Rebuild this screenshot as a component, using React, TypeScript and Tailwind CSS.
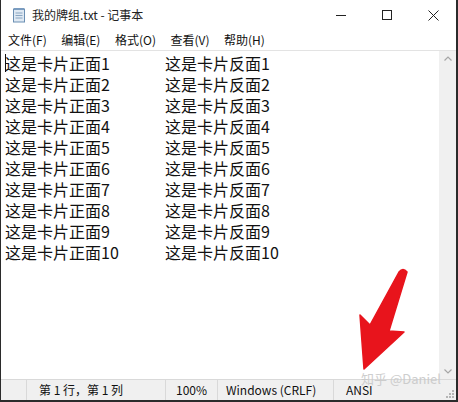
import React from "react";

const FONT = { fontFamily: '"Microsoft YaHei", "Noto Sans CJK SC", "Noto Sans", sans-serif' };

const rows = Array.from({ length: 10 }, (_, i) => i + 1);

function NotepadIcon() {
  return (
    <svg width="14" height="16" viewBox="0 0 14 16">
      <rect x="1.5" y="2" width="11" height="13" fill="#dfe9f3" stroke="#6b8fb3" strokeWidth="1" />
      <line x1="3.5" y1="6" x2="10.5" y2="6" stroke="#8aa6c2" />
      <line x1="3.5" y1="8.5" x2="10.5" y2="8.5" stroke="#8aa6c2" />
      <line x1="3.5" y1="11" x2="10.5" y2="11" stroke="#8aa6c2" />
      <path d="M2 1 h10 v2 h-10z" fill="#7a9cc0" />
    </svg>
  );
}

export default function App() {
  return (
    <div
      className="w-[458px] h-[402px] flex flex-col bg-white border-l border-r-2 border-b-2 border-[#2b2b2b] overflow-hidden relative text-[#111]"
      style={FONT}
    >
      {/* title bar */}
      <div className="h-[30px] flex items-center shrink-0">
        <div className="pl-[11px] pr-[6px] flex items-center">
          <NotepadIcon />
        </div>
        <span className="text-[12px] text-[#222]">我的牌组.txt - 记事本</span>
        <div className="ml-auto flex items-center h-full">
          <div className="w-[46px] h-full flex items-center justify-center">
            <div className="w-[10px] h-px bg-[#222]" />
          </div>
          <div className="w-[46px] h-full flex items-center justify-center">
            <div className="w-[10px] h-[10px] border border-[#222]" />
          </div>
          <div className="w-[46px] h-full flex items-center justify-center">
            <svg width="11" height="11" viewBox="0 0 11 11">
              <path d="M0.5 0.5 L10.5 10.5 M10.5 0.5 L0.5 10.5" stroke="#222" strokeWidth="1" />
            </svg>
          </div>
        </div>
      </div>

      {/* menu bar */}
      <div className="h-[20px] flex items-center text-[12px] shrink-0 pl-[7px] gap-[14.5px] text-[#111]">
        <span>文件(F)</span>
        <span>编辑(E)</span>
        <span>格式(O)</span>
        <span>查看(V)</span>
        <span>帮助(H)</span>
      </div>

      {/* editor */}
      <div className="flex-1 flex border-t border-[#e3e3e3] min-h-0">
        <div className="flex-1 relative pl-[4px] pt-[1px]">
          <div className="absolute left-[4px] top-[3px] w-px h-[18px] bg-[#111]" />
          {rows.map((n) => (
            <div key={n} className="flex h-[21.1px] items-center text-[16px] leading-[20px]">
              <span className="w-[160px]">这是卡片正面{n}</span>
              <span>这是卡片反面{n}</span>
            </div>
          ))}
        </div>
        <div className="w-[17px] bg-[#f0f0f0] flex flex-col justify-between items-center py-[5px]">
          <svg width="8" height="5" viewBox="0 0 8 5">
            <path d="M0.5 4.5 L4 1 L7.5 4.5" fill="none" stroke="#a6a6a6" strokeWidth="1.2" />
          </svg>
          <svg width="8" height="5" viewBox="0 0 8 5">
            <path d="M0.5 0.5 L4 4 L7.5 0.5" fill="none" stroke="#a6a6a6" strokeWidth="1.2" />
          </svg>
        </div>
      </div>

      {/* status bar */}
      <div className="h-[21px] shrink-0 bg-[#f0f0f0] border-t border-[#d9d9d9] flex items-center text-[12px] text-[#111]">
        <div className="w-[26px] h-full border-r border-[#d9d9d9]" />
        <div className="w-[139px] h-full border-r border-[#d9d9d9] flex items-center pl-[12px]">第 1 行，第 1 列</div>
        <div className="w-[52px] h-full border-r border-[#d9d9d9] flex items-center pl-[10px]">100%</div>
        <div className="w-[116px] h-full border-r border-[#d9d9d9] flex items-center pl-[8px]">Windows (CRLF)</div>
        <div className="flex-1 h-full flex items-center pl-[12px]">ANSI</div>
        <div className="w-[12px] h-full flex items-end justify-end pb-[2px] pr-[2px]">
          <svg width="8" height="8" viewBox="0 0 8 8">
            <rect x="6" y="0" width="2" height="2" fill="#b5b5b5" />
            <rect x="3" y="3" width="2" height="2" fill="#b5b5b5" />
            <rect x="6" y="3" width="2" height="2" fill="#b5b5b5" />
            <rect x="0" y="6" width="2" height="2" fill="#b5b5b5" />
            <rect x="3" y="6" width="2" height="2" fill="#b5b5b5" />
            <rect x="6" y="6" width="2" height="2" fill="#b5b5b5" />
          </svg>
        </div>
      </div>

      {/* watermark */}
      <div className="absolute left-[360px] top-[369px] text-[13px] text-[#c9c9c9] opacity-90 whitespace-nowrap">
        知乎 @Daniel
      </div>

      {/* red arrow */}
      <svg className="absolute left-0 top-0 pointer-events-none" width="458" height="402" viewBox="0 0 458 402">
        <path
          d="M398 272 Q402 267 406 272 L388 331 L403 332 L363 369 L359 315 L369 325 Z"
          fill="#e8141c"
          stroke="#e8141c"
          strokeWidth="1.5"
          strokeLinejoin="round"
        />
      </svg>
    </div>
  );
}
